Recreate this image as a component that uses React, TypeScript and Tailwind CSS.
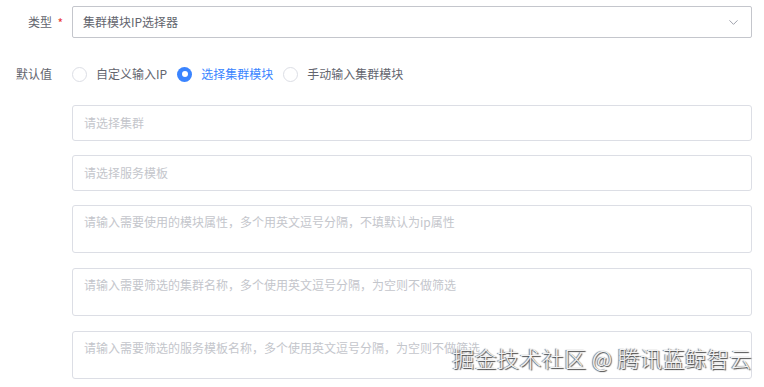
import { ChevronDown } from "lucide-react"

const font = { fontFamily: '"Noto Sans CJK SC", "Noto Sans", sans-serif' }

const Radio = ({ label, checked }: { label: string; checked?: boolean }) => (
  <label className="flex items-center mr-[10px]">
    {checked ? (
      <span className="w-[15px] h-[15px] rounded-full bg-[#3a84ff] flex items-center justify-center">
        <span className="w-[6px] h-[6px] rounded-full bg-white" />
      </span>
    ) : (
      <span className="w-[15px] h-[15px] rounded-full border border-[#dcdee5] bg-white" />
    )}
    <span className={"ml-[9px] text-[12px] " + (checked ? "text-[#3a84ff]" : "text-[#63656e]")}>{label}</span>
  </label>
)

const Field = ({ placeholder }: { placeholder: string }) => (
  <div className="h-[36px] border border-[#dcdee5] rounded-[3px] px-[11px] flex items-center text-[12px] text-[#c4c6cc] mb-[14px]">
    {placeholder}
  </div>
)

const Area = ({ placeholder }: { placeholder: string }) => (
  <div className="h-[48px] border border-[#dcdee5] rounded-[3px] px-[11px] pt-[6px] text-[12px] leading-[20px] text-[#c4c6cc] mb-[15px]">
    {placeholder}
  </div>
)

const App = () => {
  return (
    <div className="relative w-[764px] h-[387px] bg-white overflow-hidden" style={font}>
      <div className="pt-[6px] pr-[12px]">
        <div className="flex items-center">
          <div className="w-[72px] shrink-0 text-right pr-[20px] text-[12px] text-[#63656e] relative">
            类型
            <span className="absolute right-[9px] top-[1px] text-[#ea3636]">*</span>
          </div>
          <div className="flex-1 h-[32px] border border-[#c4c6cc] rounded-[2px] pl-[10px] pr-[10px] flex items-center justify-between text-[12px] text-[#63656e]">
            <span>集群模块IP选择器</span>
            <ChevronDown size={15} strokeWidth={1.5} className="text-[#979ba5]" />
          </div>
        </div>

        <div className="flex items-center h-[32px] mt-[20px]">
          <div className="w-[72px] shrink-0 text-right pr-[20px] text-[12px] text-[#63656e]">默认值</div>
          <Radio label="自定义输入IP" />
          <Radio label="选择集群模块" checked />
          <Radio label="手动输入集群模块" />
        </div>

        <div className="ml-[72px] mt-[15px]">
          <Field placeholder="请选择集群" />
          <Field placeholder="请选择服务模板" />
          <Area placeholder="请输入需要使用的模块属性，多个用英文逗号分隔，不填默认为ip属性" />
          <Area placeholder="请输入需要筛选的集群名称，多个使用英文逗号分隔，为空则不做筛选" />
          <Area placeholder="请输入需要筛选的服务模板名称，多个使用英文逗号分隔，为空则不做筛选" />
        </div>
      </div>

      <div className="absolute right-[12px] top-[342px] text-[22px] leading-[30px] tracking-[0.4px] font-light text-[#f2f2f2] [text-shadow:1px_1px_1px_#444,-1px_0_1px_#666]">
        掘金技术社区 @ 腾讯蓝鲸智云
      </div>
    </div>
  )
}

export default App
